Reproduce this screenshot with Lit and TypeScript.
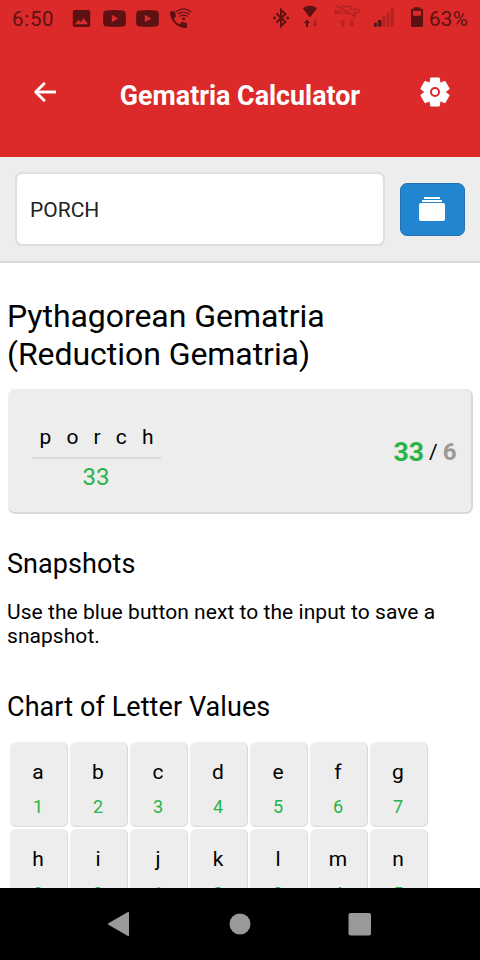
import { LitElement, html, css, svg } from "lit";
import { customElement } from "lit/decorators.js";

const DARK = "#5c1112";

@customElement("status-bar")
class StatusBar extends LitElement {
  static styles = css`
    :host { display: flex; height: 37px; box-sizing: border-box; padding-left: 12px; align-items: center; color: #5c1112; font-size: 20.5px; }
    svg { display: block; flex: none; }
    .clock { width: 58px; letter-spacing: 0.7px; white-space: nowrap; }
    .left { width: 202px; flex: none; }
    .right { width: 154px; flex: none; }
    .pct { margin-left: 3px; letter-spacing: 0.3px; }
  `;
  render() {
    return html`
      <span class="clock">6:50</span>
      <svg class="left" width="202" height="37" viewBox="70 0 202 37" fill=${DARK}>
        <path fill-rule="evenodd" d="M74.800 10h13.400q2 0 2 2v13q0 2-2 2H74.800q-2 0-2-2V12q0-2 2-2zM75 24.300h13l-4.200-6-3.300 4-2.100-2.600z"/>
        <path fill-rule="evenodd" d="M106.500 10.500q8-.8 16 0 3 .2 3.200 3 .5 5 0 10-.2 2.800-3.200 3-8 .8-16 0-3-.2-3.200-3-.5-5 0-10 .2-2.800 3.200-3zM111.800 14.800v7.400l6.400-3.700z"/>
        <path fill-rule="evenodd" d="M139.500 10.500q8-.8 16 0 3 .2 3.200 3 .5 5 0 10-.2 2.800-3.200 3-8 .8-16 0-3-.2-3.200-3-.5-5 0-10 .2-2.800 3.200-3zM144.800 14.800v7.400l6.400-3.700z"/>
        <path d="M171 11.300h3.300q.9 0 1 .9.100 2 .7 3.600.2.700-.3 1.200l-2 2q2.200 4 5.700 5.300l2-2q.5-.5 1.200-.3 1.600.6 3.400.7 1 .1 1 1v3.300q0 1-1 1-7-.1-11.500-5-4.500-4.700-4.600-10.700 0-1 1.100-1z"/>
        <circle cx="183.600" cy="18.700" r="1.500"/>
        <g fill="none" stroke=${DARK} stroke-width="1.150" stroke-linecap="round">
          <path d="M176.300 11.700q7.300-5.700 14.600 0M178.200 14q5.400-4 10.800 0M180 16.300q3.600-2.500 7.200 0"/>
        </g>
      </svg>
      <svg class="right" width="154" height="37" viewBox="272 0 154 37" fill=${DARK}>
        <path fill="none" stroke=${DARK} stroke-width="2" d="M276.500 13.500l8.900 8.400-4.400 4V10.100l4.400 4-8.900 8.400"/>
        <circle cx="274.500" cy="18" r="1.400"/><circle cx="287.700" cy="18" r="1.400"/>
        <path d="M302.700 8.200q7.200-4.900 14.400 0l-7.200 9.300z"/>
        <path d="M307 19.600l3.100 3.400h-2v3.900h-2.200V23h-2z"/>
        <path opacity=".35" d="M315.200 26.900l-3.100-3.400h2v-3.900h2.200v3.900h2z"/>
        <g opacity=".3">
          <path fill="none" stroke=${DARK} stroke-width="1.500" stroke-linejoin="round" d="M336 5.500l20 11.500M341 6.500h10v3h8v3h-4v3.500M335.500 9v4.500h8M335.500 11.500h6M344 13.500h4v-3M351 7v2.500M353 12.700h4M342 7v3"/>
          <path d="M342.700 19.600l3.100 3.400h-2v3.900h-2.200V23h-2zM351.700 26.900l-3.100-3.400h2v-3.900h2.200v3.900h2z"/>
        </g>
        <path d="M374 22.700h3v4h-3zM378 20h3.400v6.700H378z"/>
        <path opacity=".3" d="M382.200 16.300h3.200v10.400h-3.200zM386.500 12.200h3v14.500h-3zM390.600 8.300h3.200v18.400h-3.200z"/>
        <path fill-rule="evenodd" d="M414 7.300h6v1.500h1.700q1.300 0 1.300 1.300V25.700q0 1.300-1.300 1.300h-9.400q-1.300 0-1.300-1.300V10.100q0-1.300 1.300-1.300H414zM413 10.800v4.900h8v-4.900z"/>
      </svg>
      <span class="pct">63%</span>
    `;
  }
}

@customElement("title-bar")
class TitleBar extends LitElement {
  static styles = css`
    :host { display: grid; grid-template-columns: 90px 1fr 90px; height: 110px; align-items: center; justify-items: center; color: #fff; }
    h1 { margin: 7px 0 0; font-size: 26.8px; font-weight: 700; line-height: 32px; white-space: nowrap; }
    svg { display: block; }
  `;
  render() {
    return html`
      <svg width="24" height="24" viewBox="0 0 24 24" fill="none" stroke="#fff" stroke-width="2.900" stroke-linecap="round" stroke-linejoin="round"><path d="M11 3.800L2.700 12l8.300 8.200"/><path stroke-linecap="butt" d="M3 12h20"/></svg>
      <h1>Gematria Calculator</h1>
      <svg width="34" height="34" viewBox="-17 -17 34 34">
        <g fill="#fff">
          ${[0, 60, 120].map((a) => svg`<path transform="rotate(${a})" d="M-3.700-14.400h7.400q1 0 1.200 1L5.500-8v16l-.6 5.400q-.2 1-1.200 1h-7.400q-1 0-1.200-1L-5.500 8v-16l.6-5.400q.2-1 1.200-1z"/>`)}
          <circle r="10.800"/>
        </g>
        <circle r="4" fill="none" stroke="#dc2a2a" stroke-width="2"/>
      </svg>
    `;
  }
}

@customElement("letter-tile")
class LetterTile extends LitElement {
  static properties = { letter: {}, value: {} };
  declare letter: string;
  declare value: string;
  static styles = css`
    :host { display: flex; flex-direction: column; align-items: center; box-sizing: border-box; width: 58px; height: 85px; padding-top: 18px; background: #ededed; border: solid #d9d9d9; border-width: 0 1.500px 1.500px 0; border-radius: 6px; }
    .letter { font-size: 21px; line-height: 25px; }
    .value { margin-top: 11px; font-size: 18px; line-height: 22px; color: #27b548; }
  `;
  render() {
    return html`<span class="letter">${this.letter}</span><span class="value">${this.value}</span>`;
  }
}

@customElement("app-root")
class AppRoot extends LitElement {
  static styles = css`
    :host { display: flex; flex-direction: column; width: 480px; height: 960px; overflow: hidden; background: #fff; color: #000; font-family: Roboto, sans-serif; }
    .top { flex: none; height: 157px; background: #dc2a2a; }
    .search { flex: none; display: flex; align-items: center; justify-content: space-between; box-sizing: border-box; height: 106px; padding: 0 15px; background: #ededed; border-bottom: 2px solid #d9d9d9; }
    .field { box-sizing: border-box; width: 370px; height: 74px; padding-left: 13px; border: 2px solid #dedede; border-radius: 7px; background: #fff; color: #222; font-size: 21px; line-height: 73px; }
    .save { display: flex; align-items: center; justify-content: center; box-sizing: border-box; width: 65px; height: 53px; padding-right: 1px; border: 1px solid #2471b5; border-radius: 7px; background: #2185d0; }
    .content { flex: 1; min-height: 0; overflow: hidden; padding: 34px 7.500px 0; }
    h2, h3, p { margin: 0 0 0 -0.5px; font-weight: 400; }
    h2 { font-size: 32px; line-height: 38px; letter-spacing: -0.05px; }
    h3 { font-size: 27px; line-height: 32px; letter-spacing: 0.08px; }
    .result { display: flex; align-items: center; justify-content: space-between; box-sizing: border-box; height: 125px; margin-top: 16px; padding: 2px 14px 0 24px; background: #ededed; border: solid #d9d9d9; border-width: 0 2px 2px 0; border-radius: 7px; }
    .word { display: flex; flex-direction: column; align-items: center; width: 129px; margin-top: 12px; }
    .letters { display: flex; justify-content: space-between; align-self: stretch; padding: 0 7px 7px 8px; border-bottom: 2px solid #dadada; font-size: 21px; line-height: 25px; }
    .sum { margin-top: 4px; font-size: 24px; line-height: 28px; color: #27b548; }
    .total { display: flex; align-items: center; gap: 5px; font-size: 21px; line-height: 32px; }
    .total .main { font-size: 26.6px; font-weight: 700; color: #27b548; }
    .total .root { font-size: 24px; font-weight: 700; color: #999; }
    .snapshots { margin-top: 34px; }
    p { margin-top: 20px; font-size: 21px; line-height: 24px; letter-spacing: 0.05px; }
    .chart { margin-top: 43px; }
    .tiles { display: grid; grid-template-columns: repeat(7, 58px); gap: 2px; margin: 19px 0 0 2px; }
    .nav { flex: none; height: 72px; background: #000; display: grid; grid-template-columns: repeat(3, 120px); justify-content: center; align-items: center; justify-items: center; }
    svg { display: block; }
  `;
  render() {
    const letters = [..."abcdefghijklmn"];
    return html`
      <div class="top"><status-bar></status-bar><title-bar></title-bar></div>
      <div class="search">
        <div class="field">PORCH</div>
        <div class="save">
          <svg width="26" height="26" viewBox="0 0 26 26" fill="#fff"><path d="M5 1h16v2H5zM3 4h20v2H3z"/><rect y="7" width="26" height="18" rx="2"/></svg>
        </div>
      </div>
      <div class="content">
        <h2>Pythagorean Gematria<br>(Reduction Gematria)</h2>
        <div class="result">
          <div class="word">
            <div class="letters">${[..."porch"].map((c) => html`<span>${c}</span>`)}</div>
            <span class="sum">33</span>
          </div>
          <div class="total"><span class="main">33</span><span>/</span><span class="root">6</span></div>
        </div>
        <h3 class="snapshots">Snapshots</h3>
        <p>Use the blue button next to the input to save a snapshot.</p>
        <h3 class="chart">Chart of Letter Values</h3>
        <div class="tiles">
          ${letters.map((c, i) => html`<letter-tile .letter=${c} .value=${String((i % 9) + 1)}></letter-tile>`)}
        </div>
      </div>
      <div class="nav">
        <svg width="28" height="26" viewBox="0 0 28 26" fill="#999"><path d="M2.400 12.200L21.500 1.200q1.500-.7 1.500.9V24q0 1.500-1.500.8L2.400 13.800q-1-.8 0-1.600z"/></svg>
        <svg width="22" height="22" viewBox="0 0 22 22" fill="#999"><circle cx="11" cy="11" r="10.500"/></svg>
        <svg width="24" height="23" viewBox="0 0 24 23" fill="#999"><rect x=".5" width="22.500" height="22.500" rx="2"/></svg>
      </div>
    `;
  }
}
